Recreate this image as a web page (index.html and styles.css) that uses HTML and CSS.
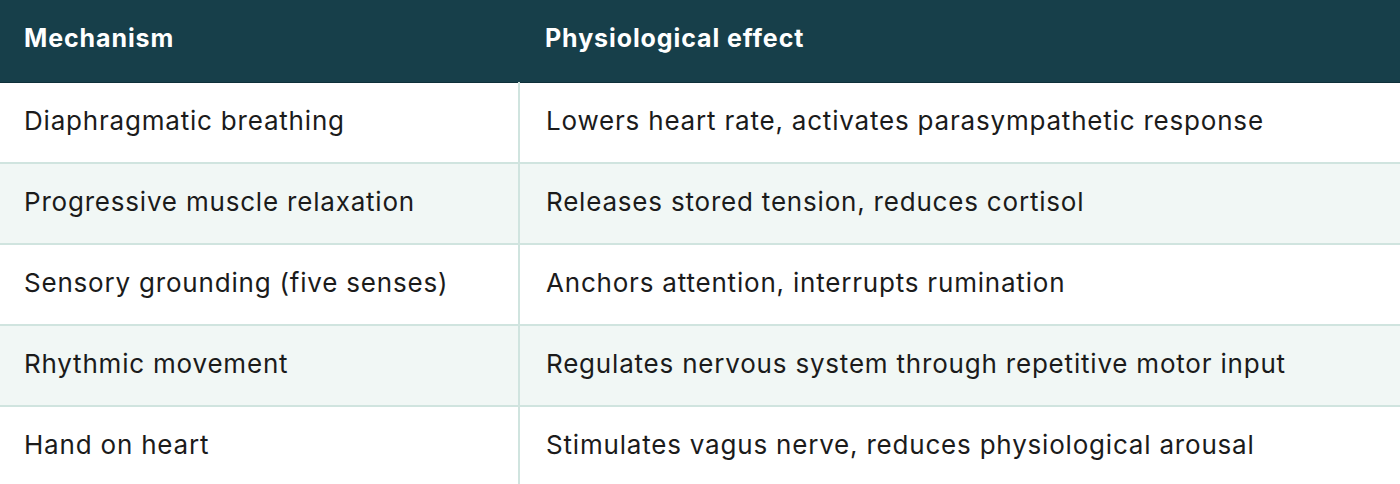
FILE: index.html
```html
<!DOCTYPE html>
<html lang="en">
<head>
<meta charset="utf-8">
<title>Mechanisms</title>
<link rel="stylesheet" href="styles.css">
</head>
<body>
<table class="grid">
  <thead>
    <tr>
      <th class="c1">Mechanism</th>
      <th class="c2">Physiological effect</th>
    </tr>
  </thead>
  <tbody>
    <tr><td class="c1">Diaphragmatic breathing</td><td class="c2">Lowers heart rate, activates parasympathetic response</td></tr>
    <tr class="alt"><td class="c1">Progressive muscle relaxation</td><td class="c2">Releases stored tension, reduces cortisol</td></tr>
    <tr><td class="c1">Sensory grounding (five senses)</td><td class="c2">Anchors attention, interrupts rumination</td></tr>
    <tr class="alt"><td class="c1">Rhythmic movement</td><td class="c2">Regulates nervous system through repetitive motor input</td></tr>
    <tr><td class="c1">Hand on heart</td><td class="c2">Stimulates vagus nerve, reduces physiological arousal</td></tr>
  </tbody>
</table>
</body>
</html>
```
FILE: styles.css
```css
html, body {
  margin: 0;
  padding: 0;
  background: #ffffff;
}
body {
  font-family: "Inter", "Liberation Sans", sans-serif;
  color: #1b1b1b;
  width: 1400px;
  height: 484px;
  overflow: hidden;
}
.grid {
  width: 1400px;
  border-collapse: collapse;
  table-layout: fixed;
}
.grid th, .grid td {
  text-align: left;
  padding: 0 0 0 24px;
  box-sizing: border-box;
}
.grid .c1 { width: 519px; }
.grid thead th {
  background: #173f4a;
  color: #ffffff;
  font-weight: 700;
  font-size: 25px;
  letter-spacing: 0.9px;
  height: 82px;
  padding-bottom: 6px;
  border-bottom: 1px solid #0e3039;
}
.grid thead th.c2 { padding-left: 26px; }
.grid tbody td {
  font-size: 26px;
  letter-spacing: 0.8px;
  font-weight: 400;
  height: 81px;
  padding-bottom: 4px;
  border-bottom: 2px solid #d0e4df;
}
.grid tbody td.c1 { border-right: 2px solid #d0e4df; }
.grid tbody td.c2 { padding-left: 26px; }
.grid tbody tr.alt td { background: #f1f7f5; }
```
